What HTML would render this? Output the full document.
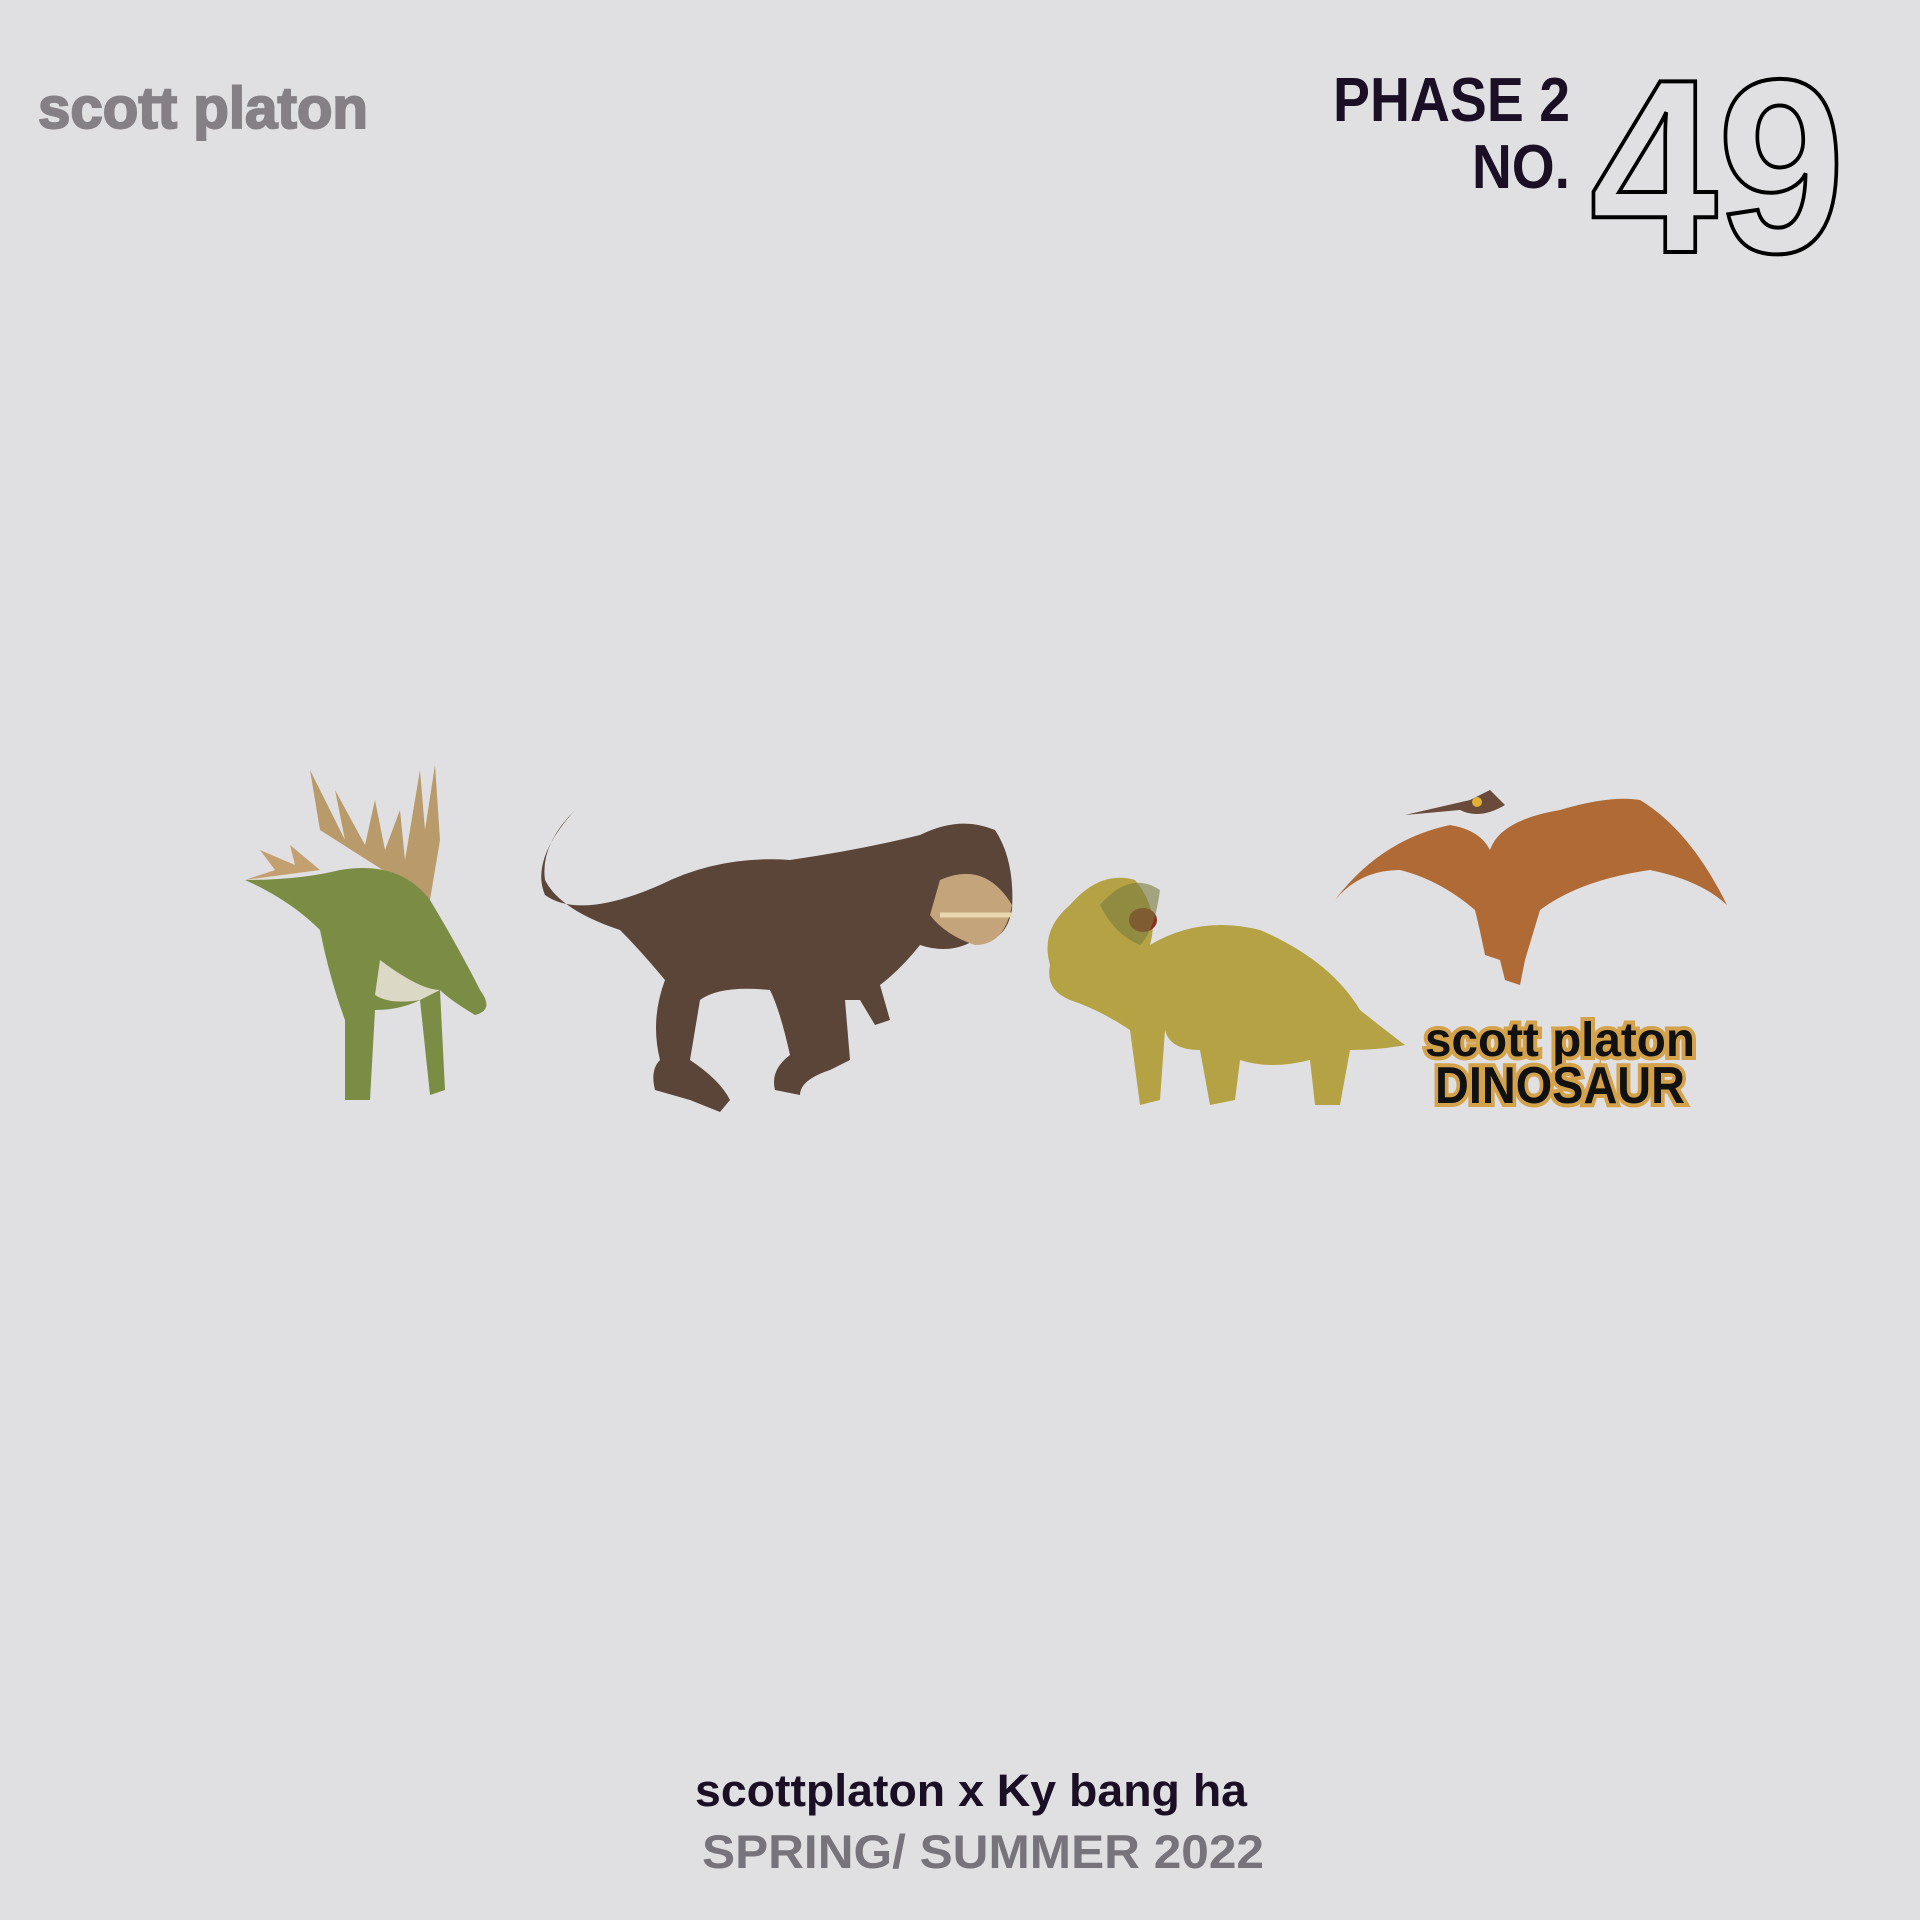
<!DOCTYPE html>
<html><head><meta charset="utf-8"><style>
html,body{margin:0;padding:0;background:#e0e0e2;}
svg{display:block}
</style></head><body>
<svg width="1920" height="1920" viewBox="0 0 1920 1920" xmlns="http://www.w3.org/2000/svg" font-family="Liberation Sans, sans-serif">
<rect width="1920" height="1920" fill="#e0e0e2"/>
<text x="38" y="128" font-size="58" font-weight="bold" fill="#858086" stroke="#858086" stroke-width="2" textLength="330" lengthAdjust="spacingAndGlyphs">scott platon</text>
<text x="1570" y="121" font-size="62" font-weight="bold" fill="#1a0f24" text-anchor="end" textLength="237" lengthAdjust="spacingAndGlyphs">PHASE 2</text>
<text x="1570" y="188" font-size="62" font-weight="bold" fill="#1a0f24" text-anchor="end" textLength="98" lengthAdjust="spacingAndGlyphs">NO.</text>
<text x="1590" y="252" font-size="248" font-weight="bold" fill="#e0e0e2" stroke="#000" stroke-width="4" textLength="255" lengthAdjust="spacingAndGlyphs">49</text>

<!-- stegosaurus -->
<g>
<path d="M320 830 L310 770 L345 840 L335 790 L365 845 L375 800 L385 850 L400 810 L405 860 L420 770 L425 830 L435 765 L440 840 L430 900 Z" fill="#b99a6a"/>
<path d="M245 880 L275 870 L260 850 L295 865 L290 845 L320 870 Z" fill="#c4a070"/>
<path d="M245 880 Q300 880 340 870 Q400 860 430 900 Q460 950 480 990 Q495 1010 475 1015 Q450 1000 440 990 L445 1090 L430 1095 L420 1000 Q400 1010 375 1010 L370 1100 L345 1100 L345 1020 Q330 980 320 930 Q290 900 245 880 Z" fill="#7b8d45"/>
<path d="M380 960 Q420 990 440 990 L420 1000 Q390 1005 375 995 Z" fill="#dcd8c6"/>
</g>

<!-- T-rex -->
<g>
<path d="M575 810 Q530 860 545 895 Q580 920 660 885 Q720 855 790 860 Q860 850 920 835 Q960 815 995 830 Q1015 860 1012 910 Q1005 945 975 940 Q950 955 920 945 Q900 970 880 985 L890 1020 L875 1025 L860 1000 L845 1000 L850 1060 L830 1070 Q800 1080 800 1095 L775 1090 Q770 1070 790 1055 Q780 1010 770 990 Q720 985 700 1000 L690 1060 Q720 1080 730 1100 L720 1112 L690 1100 L655 1090 Q650 1070 660 1060 Q650 1020 665 980 Q640 950 620 930 Q560 910 545 880 Q540 845 575 810 Z" fill="#5a4538"/>
<path d="M940 880 Q985 860 1012 905 Q1005 945 975 945 Q945 935 930 915 Z" fill="#c4a47a"/>
<path d="M940 915 L1012 915" stroke="#e8d8b0" stroke-width="5"/>
</g>

<!-- ceratopsian -->
<g>
<path d="M1050 965 Q1040 930 1070 905 Q1100 870 1135 880 Q1160 910 1150 945 Q1200 915 1260 930 Q1330 960 1360 1010 Q1385 1030 1405 1045 Q1380 1050 1350 1050 L1340 1105 L1315 1105 L1310 1060 Q1270 1070 1240 1060 L1235 1100 L1210 1105 L1200 1050 Q1170 1050 1165 1030 L1160 1100 L1140 1105 L1130 1030 Q1100 1010 1070 1000 Q1045 990 1050 965 Z" fill="#b4a244"/>
<ellipse cx="1143" cy="920" rx="14" ry="12" fill="#8a3020"/>
<path d="M1100 905 Q1130 870 1160 890 Q1155 930 1140 945 Q1115 935 1100 905 Z" fill="#7a7a40" opacity=".6"/>
</g>

<!-- pterosaur -->
<g>
<path d="M1335 900 Q1380 840 1450 825 Q1480 830 1490 850 Q1500 820 1560 810 Q1610 795 1640 800 Q1690 830 1727 905 Q1700 880 1650 870 Q1580 880 1540 910 L1525 960 L1520 985 L1505 980 L1500 960 L1485 955 Q1480 930 1475 910 Q1440 880 1400 870 Q1360 870 1335 900 Z" fill="#b06a35"/>
<path d="M1405 815 L1470 800 L1490 790 L1505 805 Q1480 820 1460 810 Z" fill="#6a4a3a"/>
<circle cx="1477" cy="802" r="5" fill="#e0b030"/>
</g>

<g font-weight="bold" font-size="48" text-anchor="middle" stroke="#d4a24a" stroke-width="8" paint-order="stroke" fill="#111">
<text x="1560" y="1056" textLength="270" lengthAdjust="spacingAndGlyphs">scott platon</text>
<text x="1560" y="1103" font-size="52" textLength="250" lengthAdjust="spacingAndGlyphs">DINOSAUR</text>
</g>

<text x="971" y="1806" font-size="45" font-weight="bold" fill="#1a0f24" text-anchor="middle" textLength="552" lengthAdjust="spacingAndGlyphs">scottplaton x Ky bang ha</text>
<text x="983" y="1868" font-size="47" font-weight="bold" fill="#77737a" text-anchor="middle" textLength="562" lengthAdjust="spacingAndGlyphs">SPRING/ SUMMER 2022</text>
</svg>
</body></html>
